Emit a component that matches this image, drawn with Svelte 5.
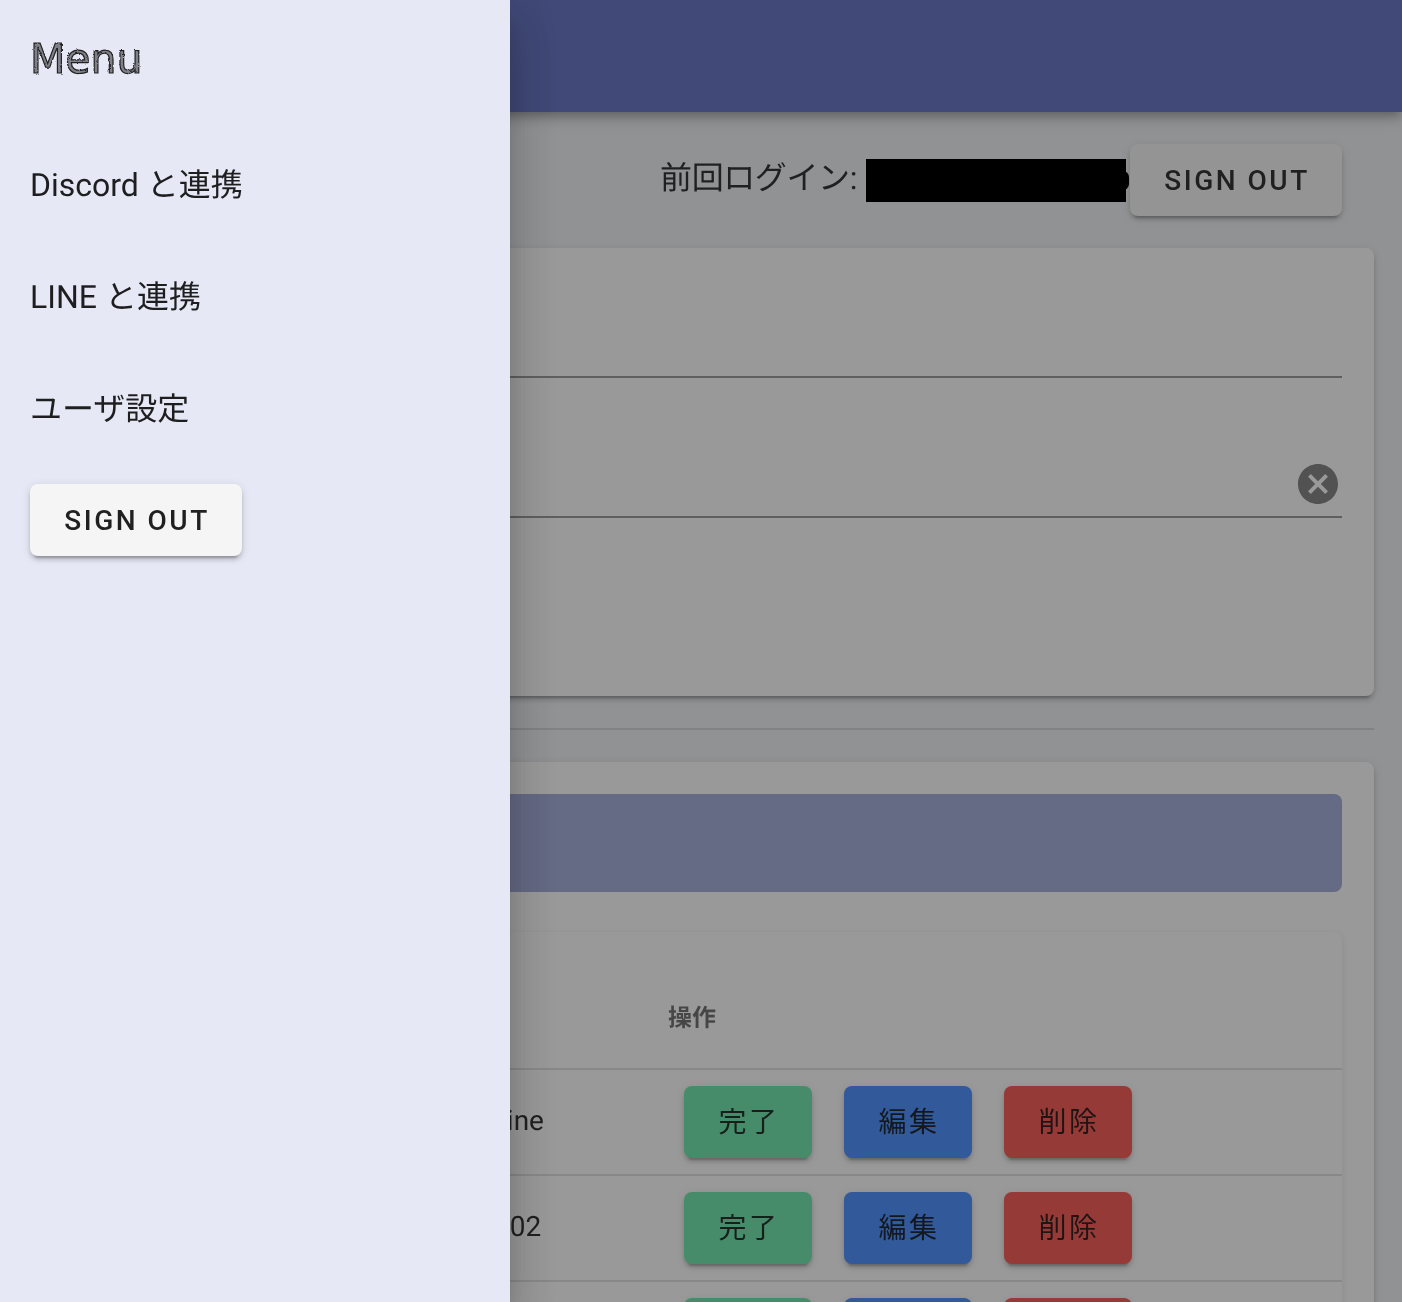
<script>
	const menuItems = ['Discord と連携', 'LINE と連携', 'ユーザ設定'];
	// third row only peeks in at the bottom of the window, so it has no labels
	const rows = ['Routine', 'Test 02', ''];
</script>

<div class="page">
	<header class="app-bar"></header>

	<main class="main">
		<div class="login-row">
			<span class="last-login">前回ログイン:</span>
			<span class="redacted"></span>
			<button class="btn btn-default">SIGN OUT</button>
		</div>

		<section class="card form-card">
			<div class="field"></div>
			<div class="field">
				<svg class="clear-icon" viewBox="0 0 24 24" aria-hidden="true">
					<path d="M12,2C17.53,2 22,6.47 22,12C22,17.53 17.53,22 12,22C6.47,22 2,17.53 2,12C2,6.47 6.47,2 12,2M15.59,7L12,10.59L8.41,7L7,8.41L10.59,12L7,15.59L8.41,17L12,13.41L15.59,17L17,15.59L13.41,12L17,8.41L15.59,7Z" />
				</svg>
			</div>
		</section>

		<hr class="divider" />

		<section class="card list-card">
			<div class="banner"></div>
			<div class="table-wrap">
				<table>
					<thead>
						<tr><th class="col-name"></th><th><span class="soft">操作</span></th></tr>
					</thead>
					<tbody>
						{#each rows as row}
							<tr>
								<td class="col-name"><span class="name soft">{row}</span></td>
								<td>
									<div class="actions">
										<button class="btn btn-done">{row ? '完了' : ''}</button>
										<button class="btn btn-edit">{row ? '編集' : ''}</button>
										<button class="btn btn-delete">{row ? '削除' : ''}</button>
									</div>
								</td>
							</tr>
						{/each}
					</tbody>
				</table>
			</div>
		</section>
	</main>

	<div class="scrim"></div>

	<aside class="drawer">
		<svg class="filter-defs" aria-hidden="true">
			<filter id="sketch">
				<feTurbulence type="fractalNoise" baseFrequency="0.35" numOctaves="2" seed="4" />
				<feDisplacementMap in="SourceGraphic" scale="2.5" />
			</filter>
		</svg>
		<div class="drawer-title">Menu</div>
		<nav class="soft">
			{#each menuItems as item}
				<div class="menu-item">{item}</div>
			{/each}
		</nav>
		<button class="btn btn-default drawer-btn">SIGN OUT</button>
	</aside>
</div>

<style>
	:global(body) { margin: 0; overflow: hidden; }
	.page {
		position: relative;
		height: 100vh;
		overflow: hidden;
		background: #f0f2f6;
		color: rgba(0, 0, 0, 0.87);
		font-family: Roboto, "Noto Sans CJK JP", sans-serif;
		text-rendering: geometricPrecision;
	}
	/* own layer, so the text gets greyscale antialiasing */
	.soft { will-change: opacity; }
	.app-bar {
		height: 112px;
		background: #5c6bc0;
		box-shadow: 0 4px 8px -2px rgba(0, 0, 0, 0.2), 0 8px 10px 0 rgba(0, 0, 0, 0.14), 0 2px 20px 0 rgba(0, 0, 0, 0.12);
		position: relative;
	}
	.main { padding: 32px 28px 0; }
	.login-row {
		display: flex;
		justify-content: flex-end;
		align-items: center;
		padding-right: 32px;
		margin-bottom: 32px;
	}
	.last-login {
		font-size: 32px;
		letter-spacing: -0.4px;
		margin: -9px 9px 0 0;
		will-change: opacity;
	}
	.redacted {
		position: relative;
		z-index: 2;
		width: 260px;
		height: 43px;
		margin: 1px 4px 0 0;
		background: #000;
	}
	.redacted::after {
		content: '';
		position: absolute;
		right: -3px;
		top: 12px;
		width: 6px;
		height: 19px;
		border-radius: 0 6px 6px 0;
		background: #000;
	}
	.btn {
		height: 72px;
		width: 128px;
		padding: 0 0 0 2px;
		border: none;
		border-radius: 8px;
		font-family: inherit;
		font-size: 28px;
		font-weight: 500;
		letter-spacing: 2.5px;
		color: rgba(0, 0, 0, 0.87);
		box-shadow: 0 6px 2px -4px rgba(0, 0, 0, 0.2), 0 4px 4px 0 rgba(0, 0, 0, 0.14), 0 2px 10px 0 rgba(0, 0, 0, 0.12);
		will-change: opacity;
	}
	.btn-default { width: 212px; background: #f5f5f5; }
	.btn-done, .btn-edit, .btn-delete { font-weight: 400; padding-bottom: 4px; }
	.btn-done { background: #66e8aa; }
	.btn-edit { background: #4189ff; }
	.btn-delete { background: #fa504c; }
	.card {
		background: #fff;
		border-radius: 8px;
		box-shadow: 0 6px 2px -4px rgba(0, 0, 0, 0.2), 0 4px 4px 0 rgba(0, 0, 0, 0.14), 0 2px 10px 0 rgba(0, 0, 0, 0.12);
	}
	.form-card { padding: 32px 32px 178px; }
	.field {
		position: relative;
		height: 96px;
		border-bottom: 2px solid rgba(0, 0, 0, 0.42);
	}
	.field + .field { margin-top: 42px; }
	.clear-icon {
		position: absolute;
		right: 0;
		top: 40px;
		width: 48px;
		height: 48px;
		fill: #7c7c7c;
	}
	.divider {
		height: 2px;
		margin: 32px 0;
		border: none;
		background: rgba(0, 0, 0, 0.12);
	}
	.list-card { padding: 32px; }
	.banner {
		height: 98px;
		border-radius: 8px;
		background: #9fa8da;
	}
	.table-wrap {
		margin-top: 40px;
		border-radius: 8px;
		background: #fff;
		box-shadow: 0 2px 6px rgba(0, 0, 0, 0.12);
	}
	table { width: 100%; border-collapse: collapse; }
	th {
		padding: 69px 16px 33px;
		line-height: 34px;
		text-align: left;
		font-size: 24px;
		font-weight: 700;
		color: rgba(0, 0, 0, 0.6);
		border-bottom: 2px solid rgba(0, 0, 0, 0.12);
	}
	th.col-name { padding: 0; width: 592px; }
	td {
		padding: 16px;
		font-size: 28px;
		border-bottom: 2px solid rgba(0, 0, 0, 0.12);
	}
	td.col-name { padding-left: 389px; }
	.name { display: block; margin-top: -4px; }
	.actions { display: flex; gap: 32px; margin-left: 16px; }
	.scrim {
		position: absolute;
		inset: 0;
		z-index: 1;
		background: rgba(33, 33, 33, 0.46);
	}
	.drawer {
		position: absolute;
		z-index: 3;
		left: 0;
		top: 0;
		bottom: 0;
		width: 510px;
		box-sizing: border-box;
		padding-left: 30px;
		background: #e6e8f5;
		box-shadow: 0 16px 20px -10px rgba(0, 0, 0, 0.2), 0 32px 40px 2px rgba(0, 0, 0, 0.14), 0 12px 44px 4px rgba(0, 0, 0, 0.12);
	}
	.filter-defs { position: absolute; width: 0; height: 0; }
	.drawer-title {
		height: 127px;
		padding-top: 35px;
		box-sizing: border-box;
		font-family: "DejaVu Sans", sans-serif;
		font-size: 41px;
		line-height: 48px;
		color: #80808a;
		-webkit-text-stroke: 1.2px #222;
		filter: url(#sketch);
	}
	.menu-item {
		height: 112px;
		display: flex;
		align-items: center;
		font-size: 32px;
	}
	.drawer-btn { margin-top: 21px; }
</style>
